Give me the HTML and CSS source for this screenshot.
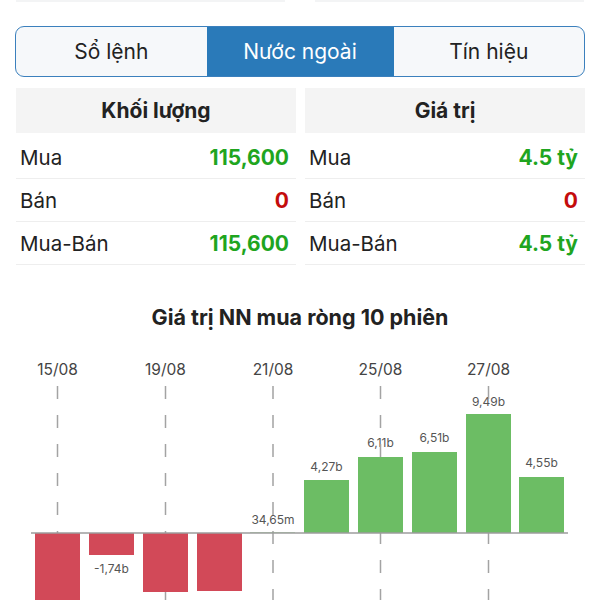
FILE: index.html
```html
<!DOCTYPE html>
<html lang="vi">
<head>
    <meta charset="UTF-8">
    <meta name="viewport" content="width=device-width, initial-scale=1.0">
    <title>Nước ngoài</title>
    <link rel="stylesheet" href="styles.css">
</head>
<body>
    <!-- Fin du tableau précédent -->
    <div class="top-rule"><span></span><span></span></div>

    <!-- Onglets -->
    <div class="tabs">
        <div class="tab">Sổ lệnh</div>
        <div class="tab active">Nước ngoài</div>
        <div class="tab">Tín hiệu</div>
    </div>

    <!-- Khối lượng / Giá trị -->
    <div class="stats">
        <div class="stat-table">
            <div class="stat-head">Khối lượng</div>
            <div class="stat-row"><span>Mua</span><span class="up">115,600</span></div>
            <div class="stat-row"><span>Bán</span><span class="down">0</span></div>
            <div class="stat-row"><span>Mua-Bán</span><span class="up">115,600</span></div>
        </div>
        <div class="stat-table">
            <div class="stat-head">Giá trị</div>
            <div class="stat-row"><span>Mua</span><span class="up">4.5 tỷ</span></div>
            <div class="stat-row"><span>Bán</span><span class="down">0</span></div>
            <div class="stat-row"><span>Mua-Bán</span><span class="up">4.5 tỷ</span></div>
        </div>
    </div>

    <!-- Graphique -->
    <h2 class="chart-title">Giá trị NN mua ròng 10 phiên</h2>
    <svg class="chart" viewBox="0 340 600 260" width="600" height="260">
        <g class="dates">
            <text x="57.5" y="375">15/08</text>
            <text x="165.5" y="375">19/08</text>
            <text x="273" y="375">21/08</text>
            <text x="380.5" y="375">25/08</text>
            <text x="488.5" y="375">27/08</text>
        </g>
        <g class="values">
            <text x="326.5" y="471">4,27b</text>
            <text x="380.5" y="447">6,11b</text>
            <text x="434.5" y="442">6,51b</text>
            <text x="488.5" y="406">9,49b</text>
            <text x="541.5" y="467">4,55b</text>
            <text x="273" y="524">34,65m</text>
            <text x="111.5" y="573">-1,74b</text>
        </g>
        <g class="grid">
            <line x1="57.5" y1="386" x2="57.5" y2="600"/>
            <line x1="165.5" y1="386" x2="165.5" y2="600"/>
            <line x1="273" y1="386" x2="273" y2="600"/>
            <line x1="380.5" y1="386" x2="380.5" y2="600"/>
            <line x1="488.5" y1="386" x2="488.5" y2="600"/>
        </g>
        <g class="bars-down">
            <rect x="35" y="533" width="45" height="80"/>
            <rect x="89" y="533" width="45" height="22"/>
            <rect x="143" y="533" width="45" height="59"/>
            <rect x="197" y="533" width="45" height="58"/>
        </g>
        <g class="bars-up">
            <rect x="250" y="532.5" width="45" height="0.5"/>
            <rect x="304" y="480" width="45" height="53"/>
            <rect x="358" y="457" width="45" height="76"/>
            <rect x="412" y="452" width="45" height="81"/>
            <rect x="466" y="414" width="45" height="119"/>
            <rect x="519" y="477" width="45" height="56"/>
        </g>
        <line class="axis" x1="31" y1="533" x2="568" y2="533"/>
    </svg>
</body>
</html>
```

FILE: styles.css
```css
/* Style général */
body, html {
    margin: 0;
    padding: 0;
    font-family: Inter, "Liberation Sans", sans-serif;
    background-color: #fff;
    color: #222;
    overflow: hidden;
}

.top-rule {
    display: flex;
    gap: 30px;
    height: 2px;
    margin: 0 16px;
}

.top-rule span {
    flex: 1;
    background-color: #f3f4f5;
}

/* Onglets */
.tabs {
    display: grid;
    grid-template-columns: 1fr 187px 1fr;
    height: 51px;
    margin: 24px 15px 0;
    box-sizing: border-box;
    border: 1.5px solid #3b80bd;
    border-radius: 9px;
    overflow: hidden;
    background-color: #f6f8fa;
}

.tab {
    display: flex;
    align-items: center;
    justify-content: center;
    font-size: 21px;
    color: #222;
}

.tab.active {
    background-color: #2a7ab9;
    color: #fff;
}

/* Tableaux */
.stats {
    display: grid;
    grid-template-columns: 1fr 1fr;
    gap: 9px;
    margin: 11px 15px 0 16px;
}

.stat-head {
    display: flex;
    align-items: center;
    justify-content: center;
    height: 45px;
    margin-bottom: 3px;
    background-color: #f4f4f4;
    font-size: 21px;
    font-weight: 700;
}

.stat-row {
    display: flex;
    align-items: center;
    justify-content: space-between;
    height: 42px;
    padding: 0 7px 0 4px;
    border-bottom: 1px solid #eeeeee;
    font-size: 20.5px;
}

.up {
    color: #1fa51f;
    font-weight: 700;
    font-size: 21px;
}

.down {
    color: #c40c0c;
    font-weight: 700;
    font-size: 21px;
}

/* Graphique */
.chart-title {
    margin: 40px 0 0;
    font-size: 21.5px;
    line-height: 24px;
    font-weight: 700;
    text-align: center;
}

.chart {
    display: block;
    margin-top: 11px;
}

.dates text {
    font-size: 15.5px;
    fill: #444;
    text-anchor: middle;
}

.values text {
    font-size: 12px;
    fill: #555;
    text-anchor: middle;
}

.grid line {
    stroke: #a3a3a3;
    stroke-width: 1.5;
    stroke-dasharray: 13 16;
}

.bars-down rect {
    fill: #d24958;
}

.bars-up rect {
    fill: #6cbd64;
}

.axis {
    stroke: #9c9c9c;
    stroke-width: 1.5;
}
```
